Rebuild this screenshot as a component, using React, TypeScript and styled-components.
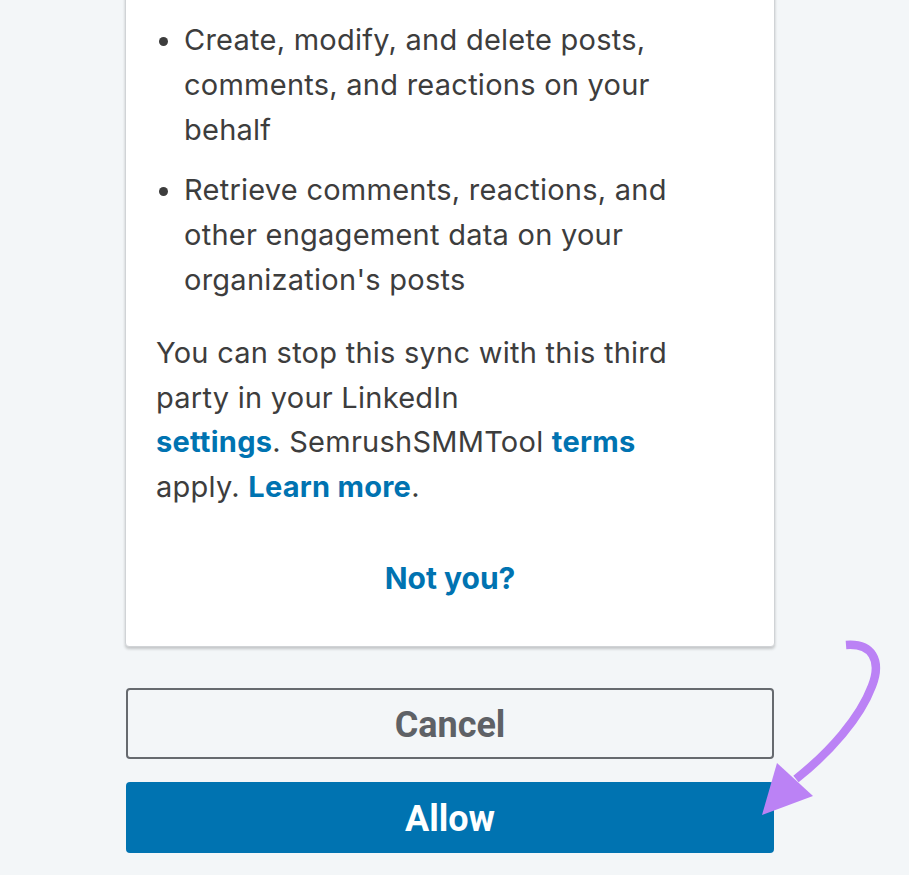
import React from "react";
import styled, { createGlobalStyle } from "styled-components";

const Global = createGlobalStyle`
  html, body { margin: 0; padding: 0; background: #f3f6f8; }
  body { font-family: Inter, Roboto, "Noto Sans", sans-serif; overflow: hidden; }
`;

const Page = styled.div`
  position: relative;
  width: 909px;
  height: 875px;
  overflow: hidden;
  background: #f3f6f8;
`;

const Column = styled.div`
  margin-left: 125px;
  width: 650px;
  display: flex;
  flex-direction: column;
`;

const Card = styled.div`
  margin-top: -21px;
  background: #ffffff;
  border: 1px solid #d0d3d6;
  border-radius: 4px;
  box-shadow: 0 2px 3px rgba(0, 0, 0, 0.2);
  padding: 38px 83px 45px 30px;
  color: #3d3d3d;
  font-size: 29px;
  letter-spacing: 0.25px;
  line-height: 44.8px;
`;

const List = styled.ul`
  margin: 0;
  padding-left: 28px;
`;

const Item = styled.li<{ $first?: boolean }>`
  margin-top: ${(p) => (p.$first ? "0" : "16px")};
`;

const Para = styled.p`
  margin: 28px 0 0;
`;

const Link = styled.a`
  color: #0073b1;
  font-weight: 700;
  text-decoration: none;
`;

const Center = styled.div`
  margin-top: 46px;
  margin-right: -53px;
  text-align: center;
  font-size: 30px;
  letter-spacing: 0;
`;

const Button = styled.button<{ $primary?: boolean }>`
  display: flex;
  align-items: center;
  justify-content: center;
  width: 648px;
  margin-left: 1px;
  height: 71px;
  padding: 3px 0 0;
  border-radius: 4px;
  font-family: Roboto, "Noto Sans", "Liberation Sans", sans-serif;
  font-size: 36px;
  font-weight: 700;
  cursor: pointer;
  border: ${(p) => (p.$primary ? "none" : "2px solid #666a6f")};
  background: ${(p) => (p.$primary ? "#0073b1" : "transparent")};
  color: ${(p) => (p.$primary ? "#ffffff" : "#5e6166")};
  margin-top: ${(p) => (p.$primary ? "23px" : "41px")};
`;

const Overlay = styled.svg`
  position: absolute;
  left: 0;
  top: 0;
  pointer-events: none;
`;

export default function App() {
  return (
    <Page>
      <Global />
      <Column>
        <Card>
          <List>
            <Item $first>
              Create, modify, and delete posts, comments, and reactions on your behalf
            </Item>
            <Item>
              Retrieve comments, reactions, and other engagement data on your organization's posts
            </Item>
          </List>
          <Para>
            You can stop this sync with this third party in your LinkedIn
            <br />
            <Link href="#">settings</Link>. SemrushSMMTool <Link href="#">terms</Link> apply.{" "}
            <Link href="#">Learn more</Link>.
          </Para>
          <Center>
            <Link href="#">Not you?</Link>
          </Center>
        </Card>
        <Button>Cancel</Button>
        <Button $primary>Allow</Button>
      </Column>
      <Overlay width="909" height="875" viewBox="0 0 909 875">
        <path
          d="M846 645 C 872 643 882 660 872 686 C 860 718 830 752 796 779"
          fill="none"
          stroke="#bb82f5"
          strokeWidth="8.5"
        />
        <polygon points="762,815 777,763 813,796" fill="#bb82f5" />
      </Overlay>
    </Page>
  );
}
